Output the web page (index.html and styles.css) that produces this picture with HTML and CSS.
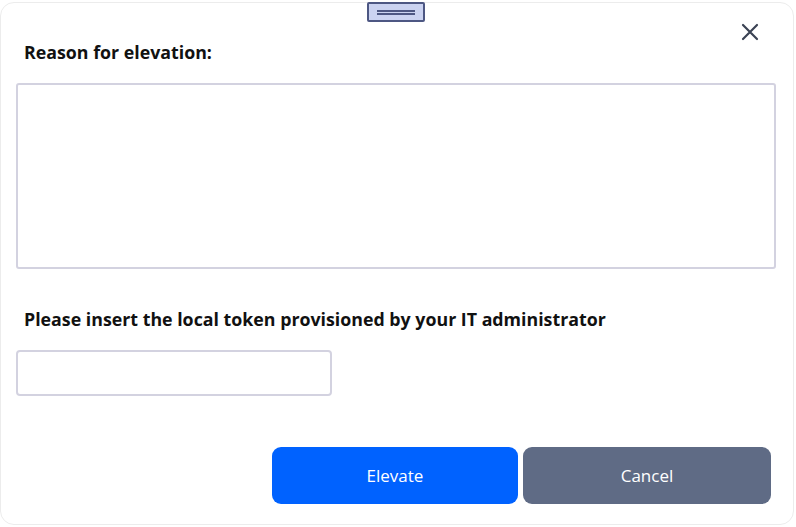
FILE: index.html
```html
<!DOCTYPE html>
<html lang="en">
  <head>
    <meta charset="UTF-8" />
    <meta name="viewport" content="width=device-width, initial-scale=1.0" />
    <title>Elevation request</title>
    <link rel="stylesheet" href="styles.css">
  </head>
  <body>
    <div class="dialog">
      <!-- drag handle on the top edge -->
      <div class="handle"><span></span><span></span></div>

      <button class="close" aria-label="Close">
        <svg width="18" height="18" viewBox="0 0 18 18">
          <path d="M2 2 L16 16 M16 2 L2 16" stroke="#3b4354" stroke-width="2.2" stroke-linecap="round" />
        </svg>
      </button>

      <label class="label" for="reason">Reason for elevation:</label>
      <textarea id="reason" class="reason"></textarea>

      <label class="label token-label" for="token">Please insert the local token provisioned by your IT administrator</label>
      <input id="token" class="token" type="text" />

      <div class="actions">
        <button class="btn elevate">Elevate</button>
        <button class="btn cancel">Cancel</button>
      </div>
    </div>
  </body>
</html>
```

FILE: styles.css
```css
body {
  margin: 0;
  background-color: #ffffff;
  font-family: "Open Sans", "Noto Sans", sans-serif;
}

.dialog {
  position: relative;
  display: flex;
  flex-direction: column;
  align-items: flex-start;
  box-sizing: border-box;
  height: 523px;
  margin: 2px 2px 0 0;
  padding: 39px 18px 0 15px;
  border: 1px solid #ececec;
  border-radius: 14px;
  background-color: #ffffff;
}

/* drag handle */
.handle {
  position: absolute;
  top: -1px;
  left: 366px;
  width: 54px;
  height: 16px;
  border: 2px solid #4d5783;
  border-radius: 2px;
  background-color: #cbd3f1;
  display: flex;
  flex-direction: column;
  justify-content: center;
  align-items: center;
  gap: 1px;
}

.handle span {
  display: block;
  width: 38px;
  height: 2px;
  background-color: #4d5783;
}

.close {
  position: absolute;
  top: 17px;
  right: 31px;
  width: 24px;
  height: 24px;
  padding: 0;
  border: none;
  background: none;
  display: flex;
  justify-content: center;
  align-items: center;
  cursor: pointer;
}

.label {
  margin-left: 8px;
  font-size: 17.8px;
  line-height: 20px;
  font-weight: 700;
  color: #111111;
}

.reason {
  box-sizing: border-box;
  width: 760px;
  height: 186px;
  margin-top: 21px;
  border: 2px solid #d3d2e0;
  border-radius: 3px;
  resize: none;
}

.token-label {
  margin-top: 40px;
}

.token {
  box-sizing: border-box;
  width: 316px;
  height: 46px;
  margin-top: 21px;
  border: 2px solid #d3d2e0;
  border-radius: 4px;
}

.actions {
  align-self: stretch;
  display: flex;
  justify-content: flex-end;
  gap: 5px;
  margin-top: 51px;
  margin-right: 4px;
}

.btn {
  width: 246px;
  height: 57px;
  border: none;
  border-radius: 9px;
  color: #ffffff;
  font-family: "Open Sans", sans-serif;
  font-size: 17px;
  cursor: pointer;
}

.elevate {
  background-color: #0062ff;
}

.cancel {
  width: 248px;
  background-color: #5f6b85;
}
```
